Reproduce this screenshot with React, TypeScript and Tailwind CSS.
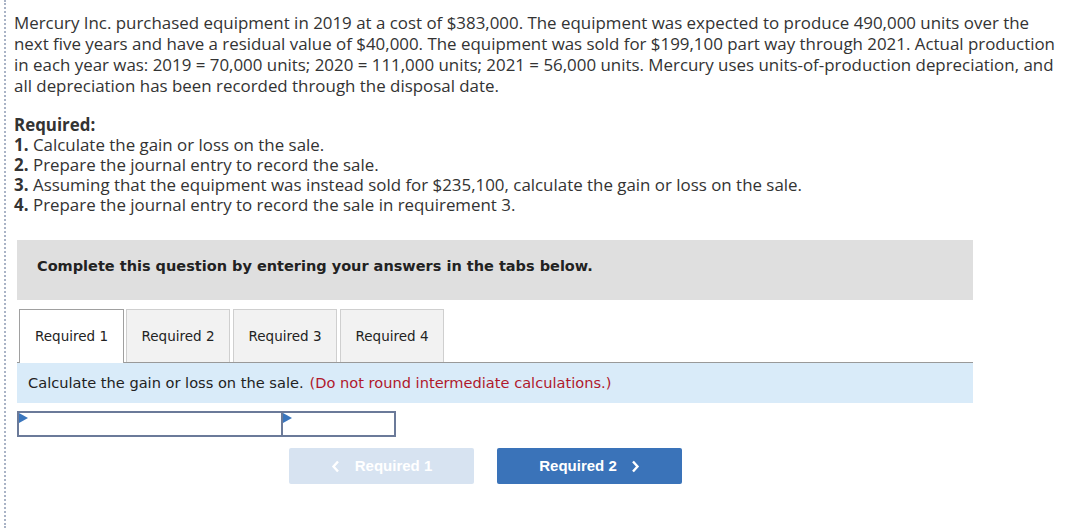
import React from "react";

function ChevronLeft() {
  return (
    <svg width="9" height="13" viewBox="0 0 9 13" className="block">
      <path d="M7 1.5 L2.5 6.5 L7 11.5" fill="none" stroke="currentColor" strokeWidth="2.4" />
    </svg>
  );
}
function ChevronRight() {
  return (
    <svg width="9" height="13" viewBox="0 0 9 13" className="block">
      <path d="M2 1.5 L6.5 6.5 L2 11.5" fill="none" stroke="currentColor" strokeWidth="2.4" />
    </svg>
  );
}

function Flag() {
  return (
    <svg width="9" height="10" viewBox="0 0 9 10" className="absolute left-0 top-0">
      <path d="M0 0 L9 5 L0 10 Z" fill="#3b76bd" />
    </svg>
  );
}

export default function App() {
  const items = [
    ["1.", "Calculate the gain or loss on the sale."],
    ["2.", "Prepare the journal entry to record the sale."],
    ["3.", "Assuming that the equipment was instead sold for $235,100, calculate the gain or loss on the sale."],
    ["4.", "Prepare the journal entry to record the sale in requirement 3."],
  ];
  return (
    <div className="w-[1070px] h-[528px] bg-white overflow-hidden">
      <div className="ml-[4px] h-full border-l-2 border-dotted border-[#a9b3c6] pl-[8px] pt-[12px]">
        <p
          className="text-[16.9px] leading-[21px] text-[#333333] whitespace-nowrap"
          style={{ fontFamily: '"Open Sans", Arial, sans-serif' }}
        >
          Mercury Inc. purchased equipment in 2019 at a cost of $383,000. The equipment was expected to produce 490,000 units over the
          <br />
          next five years and have a residual value of $40,000. The equipment was sold for $199,100 part way through 2021. Actual production
          <br />
          in each year was: 2019 = 70,000 units; 2020 = 111,000 units; 2021 = 56,000 units. Mercury uses units-of-production depreciation, and
          <br />
          all depreciation has been recorded through the disposal date.
        </p>
        <div
          className="mt-[19px] text-[16.9px] leading-[20px] text-[#333333]"
          style={{ fontFamily: '"Open Sans", Arial, sans-serif' }}
        >
          <div className="font-bold h-[20px]">Required:</div>
          {items.map(([n, t]) => (
            <div key={n} className="flex h-[20px] whitespace-nowrap">
              <span className="font-bold h-[20px]">{n}</span>
              <span className="ml-[4.5px] h-[20px]">{t}</span>
            </div>
          ))}
        </div>

        <div className="ml-[3px] w-[956px]" style={{ fontFamily: "Verdana, 'DejaVu Sans', sans-serif" }}>
          <div className="mt-[25px] h-[60px] bg-[#dfdfdf] pl-[20px] pt-[17px] text-[14.5px] font-bold leading-[18px] text-[#222]">
            Complete this question by entering your answers in the tabs below.
          </div>

          <div className="mt-[9px] flex gap-[2px] border-b border-[#999999] pl-[2px]">
            <div className="-mb-px h-[54px] w-[105px] border border-b-0 border-[#a0a0a0] bg-white flex items-center justify-center text-[13.5px] text-[#222]">
              Required 1
            </div>
            <div className="h-[53px] w-[104px] border border-b-0 border-[#cfcfcf] bg-[#f2f2f2] flex items-center justify-center text-[13.5px] text-[#222]">
              Required 2
            </div>
            <div className="ml-[1px] h-[53px] w-[104px] border border-b-0 border-[#cfcfcf] bg-[#f2f2f2] flex items-center justify-center text-[13.5px] text-[#222]">
              Required 3
            </div>
            <div className="ml-[1px] h-[53px] w-[104px] border border-b-0 border-[#cfcfcf] bg-[#f2f2f2] flex items-center justify-center text-[13.5px] text-[#222]">
              Required 4
            </div>
          </div>

          <div className="h-[40px] bg-[#d9ebf9] pl-[11px] flex items-center text-[14.6px] text-[#222]">
            <span>Calculate the gain or loss on the sale.</span>
            <span className="ml-[6px] text-[#b0182c]">(Do not round intermediate calculations.)</span>
          </div>

          <div className="mt-[8px] flex">
            <div className="relative h-[26px] w-[266px] border-2 border-[#6b7a99] bg-white">
              <Flag />
            </div>
            <div className="relative -ml-[2px] h-[26px] w-[115px] border-2 border-[#6b7a99] bg-white">
              <Flag />
            </div>
          </div>

          <div className="mt-[11px] ml-[272px] flex gap-[23px]" style={{ fontFamily: '"Liberation Sans", Arial, sans-serif' }}>
            <div className="h-[36px] w-[185px] rounded-[2px] bg-[#d7e3f1] text-white flex items-center justify-center gap-[15px] text-[15px] font-bold">
              <ChevronLeft />
              <span>Required 1</span>
            </div>
            <div className="h-[36px] w-[185px] rounded-[2px] bg-[#3a73b9] text-white flex items-center justify-center gap-[14px] text-[15px] font-bold">
              <span>Required 2</span>
              <ChevronRight />
            </div>
          </div>
        </div>
      </div>
    </div>
  );
}
